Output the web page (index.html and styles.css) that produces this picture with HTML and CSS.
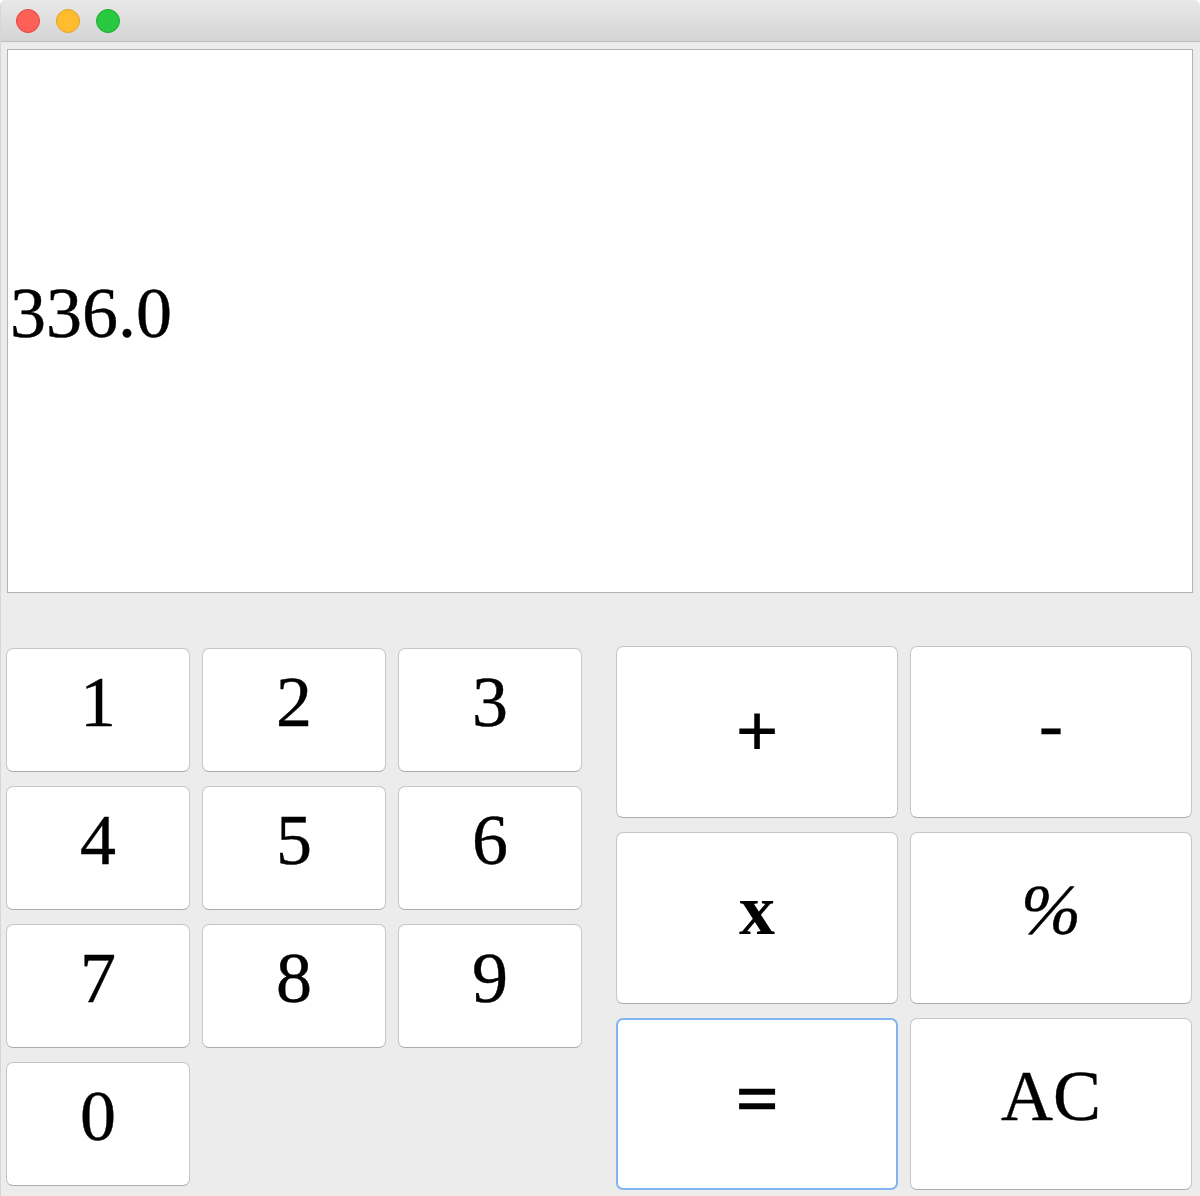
FILE: index.html
```html
<!DOCTYPE html>
<html>
<head>
<meta charset="utf-8">
<link rel="stylesheet" href="styles.css">
</head>
<body>
<div class="window">
  <div class="titlebar">
    <span class="light red"></span>
    <span class="light yellow"></span>
    <span class="light green"></span>
  </div>
  <div class="display">336.0</div>
  <div class="keypad">
    <div class="digits">
      <button class="key">1</button>
      <button class="key">2</button>
      <button class="key">3</button>
      <button class="key">4</button>
      <button class="key">5</button>
      <button class="key">6</button>
      <button class="key">7</button>
      <button class="key">8</button>
      <button class="key">9</button>
      <button class="key">0</button>
    </div>
    <div class="ops">
      <button class="key plus">+</button>
      <button class="key">-</button>
      <button class="key bold">x</button>
      <button class="key percent">%</button>
      <button class="key focused equals">=</button>
      <button class="key">AC</button>
    </div>
  </div>
</div>
</body>
</html>
```
FILE: styles.css
```css
html, body {
  margin: 0;
  padding: 0;
  background: #ffffff;
}
.window {
  width: 1200px;
  height: 1196px;
  background: #ececec;
  border-radius: 6px 6px 0 0;
  overflow: hidden;
  font-family: "Liberation Serif", "Times New Roman", serif;
  box-sizing: border-box;
  border-left: 1px solid #d6d6d6;
}
.titlebar {
  height: 41px;
  border-bottom: 1px solid #bdbdbd;
  background: linear-gradient(to bottom, #e9e9e9, #d4d4d4);
  display: flex;
  align-items: center;
  gap: 16px;
  padding-left: 15px;
}
.light {
  width: 24px;
  height: 24px;
  border-radius: 50%;
  box-sizing: border-box;
  display: block;
}
.red { background: #fe5f57; border: 1px solid #e2463f; }
.yellow { background: #febc2e; border: 1px solid #e0a229; }
.green { background: #28c840; border: 1px solid #1eac2e; }
.display {
  margin: 7px 7px 0 6px;
  height: 544px;
  box-sizing: border-box;
  border: 1px solid #b4b4b4;
  background: #ffffff;
  display: flex;
  align-items: center;
  padding: 0 0 16px 2px;
  font-size: 72px;
  color: #000;
  -webkit-text-stroke: 0.4px #000;
}
.keypad {
  display: flex;
  align-items: flex-start;
  gap: 34px;
  padding-left: 5px;
  margin-top: 53px;
}
.digits {
  margin-top: 2px;
  display: grid;
  grid-template-columns: repeat(3, 184px);
  grid-auto-rows: 124px;
  column-gap: 12px;
  row-gap: 14px;
}
.ops {
  display: grid;
  grid-template-columns: repeat(2, 282px);
  grid-auto-rows: 172px;
  column-gap: 12px;
  row-gap: 14px;
}
.key {
  box-sizing: border-box;
  margin: 0;
  background: #ffffff;
  border: 1px solid #c6c6c6;
  border-bottom-color: #acacac;
  border-radius: 7px;
  font-family: "Liberation Serif", "Times New Roman", serif;
  font-size: 72px;
  color: #000;
  display: flex;
  align-items: center;
  justify-content: center;
  padding: 0 0 16px 0;
  line-height: normal;
  -webkit-text-stroke: 0.4px #000;
}
.key.plus {
  padding-bottom: 2px;
  -webkit-text-stroke: 2px #000;
}
.key.equals {
  padding-bottom: 10px;
  -webkit-text-stroke: 2.5px #000;
}
.key.bold {
  font-weight: bold;
  -webkit-text-stroke: 0;
}
.key.percent {
  font-style: italic;
}
.key.focused {
  border: 2px solid #82b4ee;
}
```
